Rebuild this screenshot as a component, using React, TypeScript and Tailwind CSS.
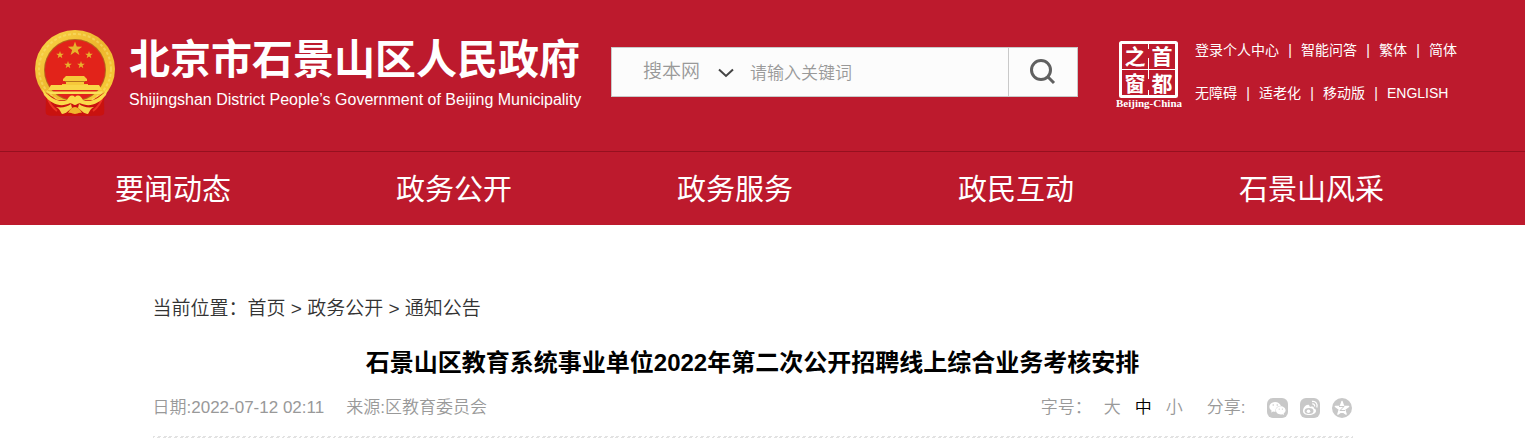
import { FaWeixin } from 'react-icons/fa'

const navItems = ['要闻动态', '政务公开', '政务服务', '政民互动', '石景山风采']
const topLinks = ['登录个人中心', '智能问答', '繁体', '简体']
const bottomLinks = ['无障碍', '适老化', '移动版', 'ENGLISH']

const star = 'M0 -1L.235 -.324L.951 -.309L.38 .124L.588 .809L0 .4L-.588 .809L-.38 .124L-.951 -.309L-.235 -.324Z'

function Emblem() {
  return (
    <svg viewBox="0 0 80 88" className="h-[88px] w-20 shrink-0" aria-hidden="true">
      <defs>
        <linearGradient id="gold" x1="0" y1="0" x2="1" y2="1">
          <stop offset="0" stopColor="#fbd94a" />
          <stop offset="0.5" stopColor="#edb52c" />
          <stop offset="1" stopColor="#fbd33c" />
        </linearGradient>
      </defs>
      <ellipse cx="40" cy="39" rx="40" ry="39" fill="url(#gold)" />
      <ellipse cx="40" cy="39" rx="36" ry="35" fill="none" stroke="#f9e478" strokeWidth="2" strokeDasharray="3 2" opacity="0.5" />
      <path d="M10 62C12 70 10 78 11 84C15 87 21 85 25 86H56C60 85 66 87 69 84C70 78 68 70 70 62L58 70H22Z" fill="#c9120f" />
      <path d="M12 66C14 73 18 78 22 81M68 66C66 73 62 78 58 81" fill="none" stroke="#ec3524" strokeWidth="2" />
      <circle cx="40" cy="40" r="31" fill="#b5641c" />
      <circle cx="40" cy="40" r="30" fill="#e2231a" />
      <g fill="#e8b22c">
        <path d={star} transform="translate(40 19) scale(7.500)" />
        <path d={star} transform="translate(25 25) scale(4)" />
        <path d={star} transform="translate(54 25) scale(4)" />
        <path d={star} transform="translate(33 35) scale(4)" />
        <path d={star} transform="translate(46 35) scale(4)" />
      </g>
      <path d="M31 46H49L52 49V51H49V54H53V56H27V54H31V51H28V49Z" fill="#f6c93a" />
      <path d="M30 51.500H50" stroke="#b8731d" strokeWidth="1" />
      <path d="M16 55H64L67 60H13Z" fill="#f9d648" />
      <path d="M12 61.500H68L65 64H15Z" fill="#fbe05c" />
      <path d="M7 58C14 68 24 73 32 70C34 66 37 64 40 67C43 64 46 66 48 70C56 73 66 68 73 58L71 65C64 74 55 77 47 74C44 72 42 75 40 75C38 75 36 72 33 74C25 77 16 74 9 65Z" fill="#fbd94a" />
      <path d="M21 77C27 78 32 77 36 74L37 78C34 80 31 84 27 84C25 81 25 79 21 77ZM59 77C53 78 48 77 44 74L43 78C46 80 49 84 53 84C55 81 55 79 59 77Z" fill="#f8d24a" />
      <path d="M33 83C35 79 37 77 40 77C43 77 45 79 47 83C44 82 42 84 40 84C38 84 36 82 33 83Z" fill="#f0b42c" />
    </svg>
  )
}

function CapitalWindow() {
  return (
    <svg viewBox="0 0 66 70" className="h-[70px] w-[66px]" fill="#fff" role="img" aria-label="首都之窗">
      <rect x="4.500" y="2.500" width="56" height="54" rx="1" fill="none" stroke="#fff" strokeWidth="3" />
      <path d="M32.500 4V9M32.500 18V39M32.500 50V56M6 29.500H60" stroke="#fff" strokeWidth="1" />
      <g className="font-['Liberation_Serif','Noto_Sans_CJK_SC',serif] font-bold" fontSize="21" textAnchor="middle">
        <text x="19" y="24">之</text>
        <text x="46" y="24">首</text>
        <text x="19" y="51">窗</text>
        <text x="46" y="51">都</text>
      </g>
      <text x="33" y="67" fontSize="11" textAnchor="middle" className="font-['Liberation_Serif',serif] font-bold">Beijing-China</text>
    </svg>
  )
}

function LinkRow({ items }: { items: string[] }) {
  return (
    <div className="flex h-[43px] items-center whitespace-nowrap">
      {items.map((item, i) => (
        <span key={item} className="flex">
          {i > 0 && <span className="w-[22px] text-center">|</span>}
          <a href="#">{item}</a>
        </span>
      ))}
    </div>
  )
}

export default function App() {
  return (
    <div className="bg-white font-['Liberation_Sans','Noto_Sans_CJK_SC',sans-serif]">
      <header className="bg-[#bd1a2d] text-white">
        <div className="flex h-[151px] items-start pl-[35px]">
          <a href="#" className="flex w-[576px] shrink-0 pt-[30px]">
            <Emblem />
            <span className="ml-[14px] flex flex-col whitespace-nowrap pt-1">
              <span className="text-[41px] leading-[52px] font-bold">北京市石景山区人民政府</span>
              <span className="text-[16px] leading-7">Shijingshan District People’s Government of Beijing Municipality</span>
            </span>
          </a>
          <form className="mt-[47px] flex h-[50px] w-[467px] shrink-0 border border-[#c9c9c9] bg-[#fcfcfc] text-[#999]">
            <div className="relative w-[126px] shrink-0">
              <select aria-label="搜索范围" className="h-full w-full appearance-none bg-transparent pl-[31px] text-[19px] font-[350] outline-none">
                <option>搜本网</option>
              </select>
              <svg viewBox="0 0 16 10" className="pointer-events-none absolute top-5 right-1 h-[10px] w-4" fill="none" stroke="#444" strokeWidth="2">
                <path d="M1 1.500L8 8L15 1.500" />
              </svg>
            </div>
            <input
              type="text"
              aria-label="关键词"
              placeholder="请输入关键词"
              className="min-w-0 flex-1 bg-transparent pt-[3px] pl-3 text-[17px] font-[350] outline-none placeholder:text-[#999]"
            />
            <button type="button" aria-label="搜索" className="flex w-[69px] items-center justify-center border-l border-[#c9c9c9]">
              <svg viewBox="0 0 26 26" className="h-[26px] w-[26px]" fill="none" stroke="#606060" strokeWidth="3">
                <circle cx="11" cy="11" r="9.500" />
                <path d="M18 18L24 24" />
              </svg>
            </button>
          </form>
          <a href="#" className="mt-10 ml-[38px] shrink-0">
            <CapitalWindow />
          </a>
          <div className="mt-[29px] ml-[13px] text-[14px]">
            <LinkRow items={topLinks} />
            <LinkRow items={bottomLinks} />
          </div>
        </div>
        <nav className="grid h-[74px] grid-cols-5 items-center border-t border-[#96101f] pt-1 pr-[5px] pl-[115px] text-[29px]">
          {navItems.map((item) => (
            <a key={item} href="#" className="whitespace-nowrap">
              {item}
            </a>
          ))}
        </nav>
      </header>

      <main className="pr-5">
        <div className="mx-auto max-w-[1200px] pt-[68px]">
          <div className="text-[19px] leading-8 font-[350] whitespace-pre text-[#333]">
            当前位置：<a href="#">首页</a> &gt; <a href="#">政务公开</a> &gt; <a href="#">通知公告</a>
          </div>
          <h1 className="mt-5 text-center text-2xl leading-9 font-bold text-black">
            石景山区教育系统事业单位2022年第二次公开招聘线上综合业务考核安排
          </h1>
          <div className="mt-[11px] flex items-center text-[17px] leading-8 font-[350] text-[#999]">
            <span>日期:2022-07-12 02:11</span>
            <span className="ml-[22px]">来源:区教育委员会</span>
            <div className="ml-auto flex items-center">
              <span>字号：</span>
              <button type="button" className="ml-3">大</button>
              <button type="button" className="ml-[14px] text-black">中</button>
              <button type="button" className="ml-[14px]">小</button>
              <span className="ml-6">分享:</span>
              <div className="mr-px ml-[21px] flex items-center gap-3">
                <a href="#" aria-label="微信" className="flex h-5 w-[21px] items-center justify-center rounded-[6px] bg-[#c8c8c8] text-white">
                  <FaWeixin size={17} />
                </a>
                <a href="#" aria-label="微博">
                  <svg viewBox="0 0 20 20" className="h-5 w-5">
                    <rect width="20" height="20" rx="6" fill="#c8c8c8" />
                    <path d="M9 7C6 6 3 10 3 13C3 16 6 17 9 17C13 17 16 15 16 13C16 11 15 11 14 10.500C14 8.500 12 8 10 9Z" fill="#fff" />
                    <ellipse cx="9" cy="13" rx="4.500" ry="3" fill="#c8c8c8" />
                    <circle cx="8.500" cy="13.300" r="1.800" fill="#fff" />
                    <path d="M12 3.500C15.500 2.800 18 6 16.800 9.500M12.300 6C14 5.700 15 7 14.500 8.500" fill="none" stroke="#fff" strokeWidth="1.300" />
                  </svg>
                </a>
                <a href="#" aria-label="QQ空间">
                  <svg viewBox="0 0 20 20" className="h-5 w-5">
                    <circle cx="10" cy="10" r="10" fill="#c8c8c8" />
                    <path d={star} transform="translate(10 10.500) scale(7)" fill="#fff" stroke="#fff" strokeWidth="0.200" strokeLinejoin="round" />
                    <path d="M7 8.500H12L8 12.500H13" fill="none" stroke="#c8c8c8" />
                  </svg>
                </a>
              </div>
            </div>
          </div>
          <div className="mt-3 h-[3px] bg-[repeating-linear-gradient(135deg,#e2e2e2_0_2px,#fff_2px_4px)]" />
        </div>
      </main>
    </div>
  )
}
